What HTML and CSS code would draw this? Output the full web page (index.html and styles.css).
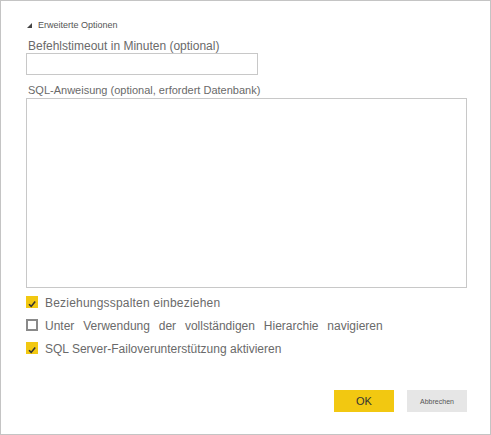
FILE: index.html
```html
<!DOCTYPE html>
<html lang="de">
<head>
  <meta charset="UTF-8">
  <meta name="viewport" content="width=device-width, initial-scale=1.0">
  <title>Erweiterte Optionen</title>
  <link rel="stylesheet" href="styles.css">
</head>
<body>

  <div class="dialog">
    <div class="toggle">
      <svg class="caret" width="5" height="5" viewBox="0 0 5 5"><polygon points="5,0 5,5 0,5" fill="#444"/></svg>
      <span>Erweiterte Optionen</span>
    </div>

    <label class="field-label first" for="timeout">Befehlstimeout in Minuten (optional)</label>
    <input type="text" id="timeout" class="field">

    <label class="field-label" for="sql">SQL-Anweisung (optional, erfordert Datenbank)</label>
    <textarea id="sql" class="field area"></textarea>

    <div class="checks">
      <div class="check-row">
        <span class="box checked"><svg width="12" height="12" viewBox="0 0 12 12"><path d="M3 6.2 L5.2 8.4 L9.2 3.6" fill="none" stroke="#333" stroke-width="1.6"/></svg></span>
        <span class="check-text spaced">Beziehungsspalten einbeziehen</span>
      </div>
      <div class="check-row">
        <span class="box"></span>
        <span class="check-text wide">Unter Verwendung der vollständigen Hierarchie navigieren</span>
      </div>
      <div class="check-row">
        <span class="box checked"><svg width="12" height="12" viewBox="0 0 12 12"><path d="M3 6.2 L5.2 8.4 L9.2 3.6" fill="none" stroke="#333" stroke-width="1.6"/></svg></span>
        <span class="check-text">SQL Server-Failoverunterstützung aktivieren</span>
      </div>
    </div>

    <div class="actions">
      <button class="btn primary">OK</button>
      <button class="btn secondary">Abbrechen</button>
    </div>
  </div>

</body>
</html>
```

FILE: styles.css
```css
body {
  margin: 0;
  font-family: 'Liberation Sans', Arial, sans-serif;
  background-color: #fff;
}

.dialog {
  box-sizing: border-box;
  width: 491px;
  height: 435px;
  border: 1px solid #c4c4c4;
  padding: 18px 23px 0 25px;
  display: flex;
  flex-direction: column;
}

.toggle {
  display: flex;
  align-items: center;
  height: 12px;
  padding-left: 1px;
  font-size: 9px;
  line-height: 12px;
  color: #555;
}

.caret {
  margin-right: 6px;
}

.field-label {
  margin-top: 9px;
  font-size: 11px;
  line-height: 13px;
  color: #6a6a6a;
  padding-left: 2px;
}

.field-label.first {
  font-size: 12px;
}

.field {
  box-sizing: border-box;
  width: 232px;
  height: 22px;
  margin: 0;
  border: 1px solid #c8c8c8;
  border-radius: 0;
  outline: none;
  font-family: inherit;
}

.area {
  width: 441px;
  height: 190px;
  margin-top: 1px;
  resize: none;
}

.checks {
  display: flex;
  flex-direction: column;
  gap: 9px;
  margin-top: 8px;
}

.check-row {
  display: flex;
  align-items: flex-start;
  height: 14px;
}

.box {
  box-sizing: border-box;
  width: 12px;
  height: 12px;
  border: 2px solid #8a8a8a;
  background-color: #fff;
}

.box.checked {
  border: none;
  background-color: #f2c811;
}

.check-text {
  margin-left: 7px;
  padding-top: 1px;
  font-size: 12px;
  line-height: 13px;
  color: #6a6a6a;
}

.check-text.spaced {
  letter-spacing: 0.2px;
}

.check-text.wide {
  word-spacing: 5.5px;
}

.actions {
  display: flex;
  justify-content: flex-end;
  gap: 13px;
  margin-top: 34px;
}

.btn {
  width: 60px;
  height: 22px;
  border: none;
  border-radius: 0;
  padding: 0;
  font-family: inherit;
  cursor: pointer;
}

.primary {
  background-color: #f2c811;
  color: #333;
  font-size: 11px;
}

.secondary {
  background-color: #e6e6e6;
  color: #555;
  font-size: 7px;
}
```
